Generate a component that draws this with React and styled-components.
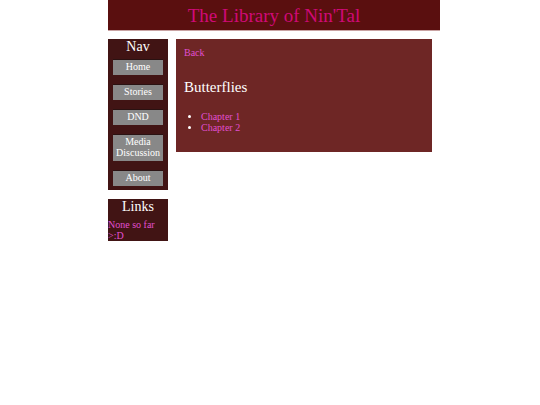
import React from 'react';
import styled, { createGlobalStyle } from 'styled-components';

const GlobalStyle = createGlobalStyle`
    body {
        margin: 0;
        background: white;
        color: white;
        font-family: "Liberation Serif", "Times New Roman", serif;
        font-size: 10px;
        line-height: 11px;
    }
`;

const Page = styled.div`
    margin: 0 100px 0 20%;
`;

const Header = styled.header`
    padding: 5px 0 3px;
    background: #5a0f0f;
    border-bottom: 1px solid #c9a3a3;
    text-align: center;
`;

const SiteTitle = styled.h1`
    margin: 0;
    color: #d00a78;
    font-size: 19px;
    font-weight: normal;
    line-height: 22px;
`;

const Columns = styled.div`
    display: flex;
    align-items: flex-start;
    gap: 8px;
    padding: 8px 8px 0 0;
`;

const Sidebar = styled.aside`
    display: flex;
    flex-direction: column;
    flex: none;
    gap: 9px;
    width: 60px;
`;

const Panel = styled.section`
    background: #411414;
`;

const PanelTitle = styled.h2`
    margin: 0 0 4px;
    font-size: 14px;
    font-weight: normal;
    line-height: 16px;
    text-align: center;
`;

const NavList = styled.nav`
    display: flex;
    flex-direction: column;
    gap: 9px;
    padding: 0 5px 4px;
`;

const NavLink = styled.a`
    padding: 1px 0 3px;
    background: #888;
    border-top: 1px solid #2a1212;
    color: white;
    text-align: center;
    text-decoration: none;
`;

const TextLink = styled.a`
    color: #e04fd0;
    text-decoration: none;
`;

const Content = styled.main`
    flex: 1;
    padding: 8px 8px 19px;
    background: #6e2625;
`;

const StoryTitle = styled.h2`
    margin: 20px 0 15px;
    font-size: 15px;
    font-weight: normal;
    line-height: 18px;
`;

const Chapters = styled.ul`
    margin: 0;
    padding-left: 17px;
`;

const pages = ['Home', 'Stories', 'DND', 'Media Discussion', 'About'];
const chapters = ['Chapter 1', 'Chapter 2'];

export default function App() {
    return (
        <Page>
            <GlobalStyle />
            <Header>
                <SiteTitle>The Library of Nin'Tal</SiteTitle>
            </Header>
            <Columns>
                <Sidebar>
                    <Panel>
                        <PanelTitle>Nav</PanelTitle>
                        <NavList>
                            {pages.map(page => <NavLink key={page} href="#">{page}</NavLink>)}
                        </NavList>
                    </Panel>
                    <Panel>
                        <PanelTitle>Links</PanelTitle>
                        <TextLink href="#">None so far &gt;:D</TextLink>
                    </Panel>
                </Sidebar>
                <Content>
                    <TextLink href="#">Back</TextLink>
                    <StoryTitle>Butterflies</StoryTitle>
                    <Chapters>
                        {chapters.map(chapter => (
                            <li key={chapter}><TextLink href="#">{chapter}</TextLink></li>
                        ))}
                    </Chapters>
                </Content>
            </Columns>
        </Page>
    );
}
